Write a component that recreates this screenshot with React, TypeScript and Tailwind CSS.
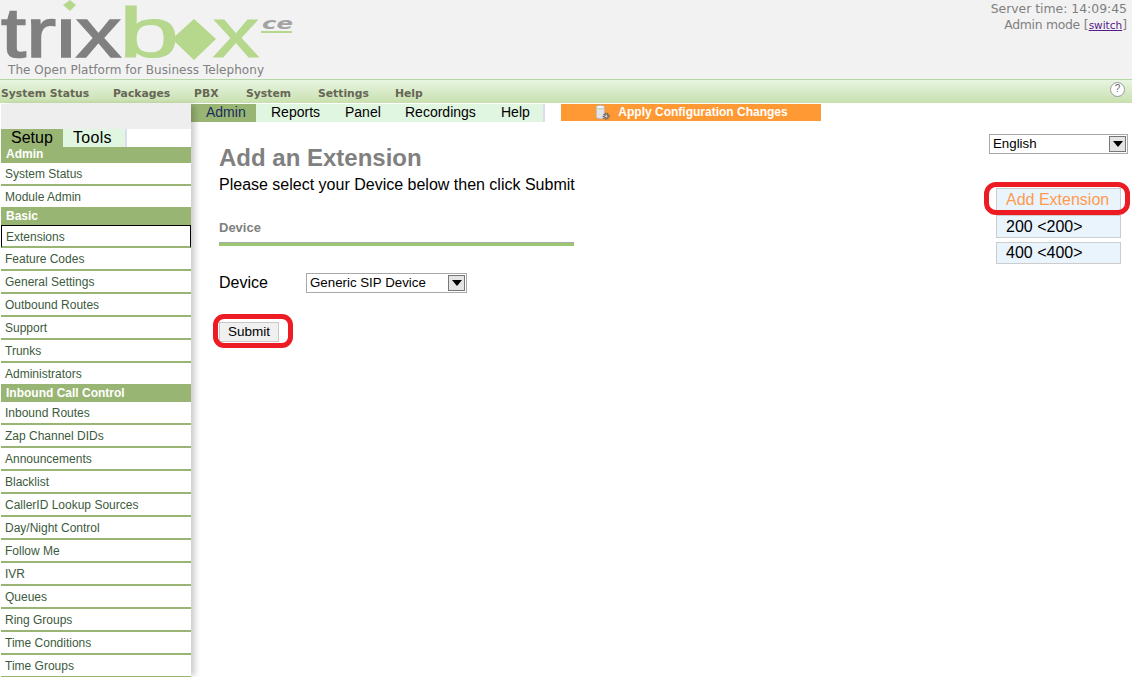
const topMenu = [
  { label: "System Status", cls: "w-[112px]" },
  { label: "Packages", cls: "w-[81px]" },
  { label: "PBX", cls: "w-[52px]" },
  { label: "System", cls: "w-[72px]" },
  { label: "Settings", cls: "w-[77px]" },
  { label: "Help", cls: "w-[40px]" },
];

const subMenu = [
  { label: "Reports", cls: "w-[74px]" },
  { label: "Panel", cls: "w-[60px]" },
  { label: "Recordings", cls: "w-[96px]" },
  { label: "Help", cls: "w-[40px]" },
];

const sideMenu = [
  { head: "Admin", h: "h-[16px] leading-[15px]", tail: true, items: ["System Status", "Module Admin"] },
  { head: "Basic", h: "h-[18px] leading-[18px]", tail: true, items: ["Extensions", "Feature Codes", "General Settings", "Outbound Routes", "Support", "Trunks", "Administrators"] },
  {
    head: "Inbound Call Control",
    h: "h-[18px] leading-[18px]",
    tail: false,
    items: [
      "Inbound Routes",
      "Zap Channel DIDs",
      "Announcements",
      "Blacklist",
      "CallerID Lookup Sources",
      "Day/Night Control",
      "Follow Me",
      "IVR",
      "Queues",
      "Ring Groups",
      "Time Conditions",
      "Time Groups",
    ],
  },
];

function Logo() {
  return (
    <svg width="300" height="79" viewBox="0 0 300 79" className="block">
      <text x="1" y="57" fontFamily="Liberation Sans" fontSize="70" fill="#808080" stroke="#808080" strokeWidth="1.6" textLength="120" lengthAdjust="spacingAndGlyphs">
        trix
      </text>
      <text x="119" y="57" fontFamily="Liberation Sans" fontSize="70" fill="#b5d88d" stroke="#b5d88d" strokeWidth="1.2" textLength="60" lengthAdjust="spacingAndGlyphs">
        b
      </text>
      <text x="213" y="57" fontFamily="Liberation Sans" fontSize="70" fill="#b5d88d" stroke="#b5d88d" strokeWidth="1.2" textLength="46" lengthAdjust="spacingAndGlyphs">
        x
      </text>
      <polygon points="172,39 194,19 216,39 194,60" fill="#b5d88d" />
      <rect x="58" y="0" width="22" height="18" fill="#f2f2f2" />
      <polygon points="70,0 76,5 70,11 63,5" fill="#b5d88d" />
      <text x="262" y="29" fontFamily="DejaVu Sans" fontStyle="italic" fontWeight="bold" fontSize="16" fill="#a3a3a3" textLength="31" lengthAdjust="spacingAndGlyphs">
        ce
      </text>
      <rect x="261" y="31" width="31" height="2" fill="#b5d88d" />
      <text x="8" y="74" fontFamily="DejaVu Sans" fontSize="12" fill="#808080" textLength="256">
        The Open Platform for Business Telephony
      </text>
    </svg>
  );
}

function DbGear() {
  return (
    <svg width="17" height="17" viewBox="0 0 16 16" className="shrink-0">
      <path d="M2 3c0-1.4 2-2 4-2s4 .6 4 2v9c0 1.2-2 2-4 2s-4-.8-4-2z" fill="#e3e3e3" stroke="#a8a8a8" strokeWidth="0.7" />
      <ellipse cx="6" cy="3" rx="4" ry="1.6" fill="#f7f7f7" stroke="#a8a8a8" strokeWidth="0.6" />
      <circle cx="11.5" cy="11.5" r="2.6" fill="none" stroke="#666" strokeWidth="1.6" strokeDasharray="1.2 0.6" />
      <circle cx="11.5" cy="11.5" r="1.5" fill="#d9d9d9" stroke="#666" strokeWidth="0.8" />
    </svg>
  );
}

function FakeSelect({ label, cls }: { label: string; cls: string }) {
  return (
    <div className={`flex h-[20px] items-center justify-between border border-[#a9a9a9] bg-white pl-[3px] pr-[1px] text-[13.3px] text-black ${cls}`}>
      <span>{label}</span>
      <span className="flex h-[16px] w-[17px] items-center justify-center border border-[#777] bg-[#e4e4e4]">
        <span className="h-0 w-0 border-x-[5px] border-t-[6px] border-x-transparent border-t-black" />
      </span>
    </div>
  );
}

export default function App() {
  return (
    <div className="h-[677px] w-[1132px] overflow-hidden bg-white font-['Liberation_Sans',sans-serif]">
      {/* header */}
      <div className="flex h-[79px] justify-between bg-[#f2f2f2]">
        <Logo />
        <div className="pr-[5px] pt-[1px] text-right font-['DejaVu_Sans',sans-serif] text-[12.4px] leading-[16px] text-[#808080]">
          <div>Server time: 14:09:45</div>
          <div>
            <span className="tracking-[-0.3px]">Admin mode</span> [<a className="text-[10.5px] text-[#551a8b] underline">switch</a>]
          </div>
        </div>
      </div>

      {/* top menu */}
      <div className="flex h-[24px] items-center justify-between border-t border-[#b5d8a5] bg-gradient-to-b from-[#e8f5e2] to-[#c8e0ae] pl-[1px] pr-[7px]">
        <div className="flex pt-[5px] font-['DejaVu_Sans',sans-serif] text-[10.8px] font-bold text-[#666655]">
          {topMenu.map((m) => (
            <span key={m.label} className={m.cls}>
              {m.label}
            </span>
          ))}
        </div>
        <span className="mb-[5px] flex h-[15px] w-[15px] items-center justify-center rounded-full border border-[#999] bg-white text-[10px] leading-none text-[#666]">
          ?
        </span>
      </div>

      <div className="flex h-[574px] pt-[1px]">
        {/* sidebar */}
        <aside className="z-10 ml-[1px] w-[190px] shrink-0 shadow-[5px_0_6px_-1px_rgba(0,0,0,0.2)]">
          <div className="h-[25px] bg-[#eeeeee]" />
          <div className="flex h-[18px] text-[16px] leading-[18px] text-black">
            <span className="w-[62px] bg-[#99b574] pl-[10px]">Setup</span>
            <span className="w-[64px] border-r-2 border-[#dcdcf0] bg-[#e0f6e0] pl-[10px] tracking-[0.3px]">Tools</span>
          </div>
          {sideMenu.map((s) => (
            <div key={s.head}>
              <div className={`${s.h} bg-[#99b574] pl-[5px] text-[12px] font-bold text-white`}>{s.head}</div>
              {s.items.map((item, i) => {
                const isLast = s.tail && i === s.items.length - 1;
                if (item === "Extensions") {
                  return (
                    <div key={item} className="box-border h-[23px] border-x border-t border-b-2 border-x-black border-t-black border-b-[#99b574] bg-white pl-[4px] text-[12px] leading-[22px] text-[#3d5a3d]">
                      {item}
                    </div>
                  );
                }
                return (
                  <div
                    key={item}
                    className={
                      isLast
                        ? "box-border h-[21px] bg-white pl-[4px] text-[12px] leading-[23px] text-[#3d5a3d]"
                        : "box-border h-[23px] border-b-2 border-[#99b574] bg-white pl-[4px] text-[12px] leading-[23px] text-[#3d5a3d]"
                    }
                  >
                    {item}
                  </div>
                );
              })}
            </div>
          ))}
        </aside>

        <div className="min-w-0 flex-1">
          {/* sub nav */}
          <div className="flex h-[18px] text-[14px] leading-[17px] text-black">
            <span className="w-[65px] bg-[#99b574] pl-[15px] text-[#1a2a5a]">Admin</span>
            <div className="flex w-[289px] border-r-2 border-[#dcdcf0] bg-[#e0f6e0] pl-[15px]">
              {subMenu.map((m) => (
                <span key={m.label} className={`${m.cls} shrink-0`}>
                  {m.label}
                </span>
              ))}
            </div>
            <div className="ml-[16px] flex h-[17px] w-[260px] items-center justify-center gap-[7px] bg-[#ff9933] text-[12px] font-bold leading-[15px] text-white">
              <DbGear />
              <span className="mb-[1px]">Apply Configuration Changes</span>
            </div>
          </div>

          <div className="flex justify-between">
            {/* form */}
            <div className="w-[390px] pl-[28px] pt-[22px]">
              <h2 className="text-[24px] font-bold leading-[28px] text-[#808080]">Add an Extension</h2>
              <p className="mt-[1px] whitespace-nowrap text-[16px] leading-[24px] text-black">Please select your Device below then click Submit</p>
              <div className="mt-[22px] w-[355px]">
                <div className="h-[23px] text-[13px] font-bold leading-[18px] text-[#808080]">Device</div>
                <div className="h-[4px] border-t border-[#a9a9a9] bg-[#9ac76f]" />
              </div>
              <div className="mt-[27px] flex h-[20px] items-center text-[16px] text-black">
                <span className="w-[87px]">Device</span>
                <FakeSelect label="Generic SIP Device" cls="w-[161px]" />
              </div>
              <div className="relative mt-[29px] h-[20px] w-[60px]">
                <button className="block h-[20px] w-[60px] border border-[#c8c8c8] bg-[#f0f0f0] text-[13.5px] leading-none text-black">Submit</button>
                <div className="absolute left-[-6px] top-[-8px] h-[34px] w-[80px] rounded-[11px] border-[5px] border-[#ed1c24]" />
              </div>
            </div>

            {/* right rail */}
            <div className="w-[143px] pr-[4px] pt-[12px]">
              <FakeSelect label="English" cls="w-[139px]" />
              <div className="ml-[7px] mt-[34px] flex w-[125px] flex-col text-[16px]">
                <div className="relative h-[24px] border border-[#cccccc] bg-[#eaf4fd] pl-[9px] leading-[22px] text-[#ff9a4d]">
                  Add Extension
                  <div className="absolute left-[-13px] top-[-7px] h-[33px] w-[146px] rounded-[12px] border-[5px] border-[#ed1c24]" />
                </div>
                <div className="mt-[3px] h-[23px] border border-[#cccccc] bg-[#eaf4fd] pl-[9px] leading-[21px] text-black">200 &lt;200&gt;</div>
                <div className="mt-[4px] h-[22px] border border-[#cccccc] bg-[#eaf4fd] pl-[9px] leading-[20px] text-black">400 &lt;400&gt;</div>
              </div>
            </div>
          </div>
        </div>
      </div>
    </div>
  );
}
